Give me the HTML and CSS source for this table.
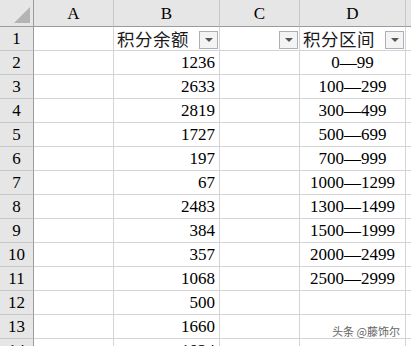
FILE: index.html
```html
<!DOCTYPE html>
<html lang="zh">
<head>
<meta charset="utf-8">
<link rel="stylesheet" href="styles.css">
</head>
<body>
<div class="sheet">
  <div class="corner"><svg width="16" height="16" viewBox="0 0 16 16"><polygon points="0,16 16,16 16,0" fill="#b4b4b4"/></svg></div>
  <div class="colhdr">A</div>
  <div class="colhdr">B</div>
  <div class="colhdr">C</div>
  <div class="colhdr">D</div>
  <div class="colhdr last"></div>

  <div class="rowhdr">1</div>
  <div class="cell"></div>
  <div class="cell hd"><span class="cjk">积分余额</span><span class="filter"><i></i></span></div>
  <div class="cell hd"><span class="filter"><i></i></span></div>
  <div class="cell hd"><span class="cjk">积分区间</span><span class="filter"><i></i></span></div>
  <div class="cell"></div>

  <div class="rowhdr">2</div><div class="cell"></div><div class="cell num">1236</div><div class="cell"></div><div class="cell mid">0—99</div><div class="cell"></div>
  <div class="rowhdr">3</div><div class="cell"></div><div class="cell num">2633</div><div class="cell"></div><div class="cell mid">100—299</div><div class="cell"></div>
  <div class="rowhdr">4</div><div class="cell"></div><div class="cell num">2819</div><div class="cell"></div><div class="cell mid">300—499</div><div class="cell"></div>
  <div class="rowhdr">5</div><div class="cell"></div><div class="cell num">1727</div><div class="cell"></div><div class="cell mid">500—699</div><div class="cell"></div>
  <div class="rowhdr">6</div><div class="cell"></div><div class="cell num">197</div><div class="cell"></div><div class="cell mid">700—999</div><div class="cell"></div>
  <div class="rowhdr">7</div><div class="cell"></div><div class="cell num">67</div><div class="cell"></div><div class="cell mid">1000—1299</div><div class="cell"></div>
  <div class="rowhdr">8</div><div class="cell"></div><div class="cell num">2483</div><div class="cell"></div><div class="cell mid">1300—1499</div><div class="cell"></div>
  <div class="rowhdr">9</div><div class="cell"></div><div class="cell num">384</div><div class="cell"></div><div class="cell mid">1500—1999</div><div class="cell"></div>
  <div class="rowhdr">10</div><div class="cell"></div><div class="cell num">357</div><div class="cell"></div><div class="cell mid">2000—2499</div><div class="cell"></div>
  <div class="rowhdr">11</div><div class="cell"></div><div class="cell num">1068</div><div class="cell"></div><div class="cell mid">2500—2999</div><div class="cell"></div>
  <div class="rowhdr">12</div><div class="cell"></div><div class="cell num">500</div><div class="cell"></div><div class="cell"></div><div class="cell"></div>
  <div class="rowhdr">13</div><div class="cell"></div><div class="cell num">1660</div><div class="cell"></div><div class="cell"></div><div class="cell"></div>
  <div class="rowhdr">14</div><div class="cell"></div><div class="cell num">1024</div><div class="cell"></div><div class="cell"></div><div class="cell"></div>
</div>
<div class="watermark">头条 @藤饰尔</div>
</body>
</html>
```

FILE: styles.css
```css
html, body {
  margin: 0;
  padding: 0;
  background: #ffffff;
  overflow: hidden;
  width: 411px;
  height: 346px;
}
body {
  position: relative;
  font-family: "Liberation Serif", "Noto Sans CJK SC", serif;
  font-size: 17px;
  color: #000;
}
.sheet {
  display: grid;
  grid-template-columns: 34px 80px 106px 80px 106px 1fr;
  grid-template-rows: 27px repeat(14, 24px);
  width: 411px;
}
.corner, .colhdr, .rowhdr, .cell {
  box-sizing: border-box;
}
.corner {
  background: #e6e6e6;
  border-right: 1px solid #9b9b9b;
  border-bottom: 1px solid #9b9b9b;
  padding: 7px 0 0 14px;
}
.corner svg { display: block; }
.colhdr {
  background: #e6e6e6;
  border-right: 1px solid #c6c6c6;
  border-bottom: 1px solid #9b9b9b;
  display: flex;
  align-items: center;
  justify-content: center;
  padding-top: 1px;
}
.colhdr.last { border-right: none; }
.rowhdr {
  background: #e6e6e6;
  border-right: 1px solid #9b9b9b;
  border-bottom: 1px solid #c6c6c6;
  display: flex;
  align-items: center;
  justify-content: center;
  padding-top: 1px;
}
.cell {
  border-right: 1px solid #d4d4d4;
  border-bottom: 1px solid #d4d4d4;
  display: flex;
  align-items: center;
  padding: 1px 3px 0 3px;
  white-space: nowrap;
}
.cell.num { justify-content: flex-end; padding-right: 4px; }
.cell.mid { justify-content: center; }
.cell.hd { padding: 0 1px 0 3px; }
.cjk {
  font-family: "Noto Sans CJK SC", sans-serif;
  font-size: 17.5px;
  color: #1a1a1a;
  letter-spacing: 0.5px;
  line-height: 1;
}
.filter {
  margin-left: auto;
  width: 19px;
  height: 18px;
  box-sizing: border-box;
  border: 1px solid #a9b0ba;
  background: #f4f4f4;
  display: flex;
  align-items: center;
  justify-content: center;
  margin-top: 2px;
}
.filter i {
  display: block;
  width: 0;
  height: 0;
  border-left: 4px solid transparent;
  border-right: 4px solid transparent;
  border-top: 4px solid #555;
}
.watermark {
  position: absolute;
  right: 11px;
  bottom: 9px;
  font-family: "Noto Sans CJK SC", sans-serif;
  font-size: 11px;
  color: #666;
  text-shadow: 0 0 2px #fff, 0 0 2px #fff;
  line-height: 1;
}
```
